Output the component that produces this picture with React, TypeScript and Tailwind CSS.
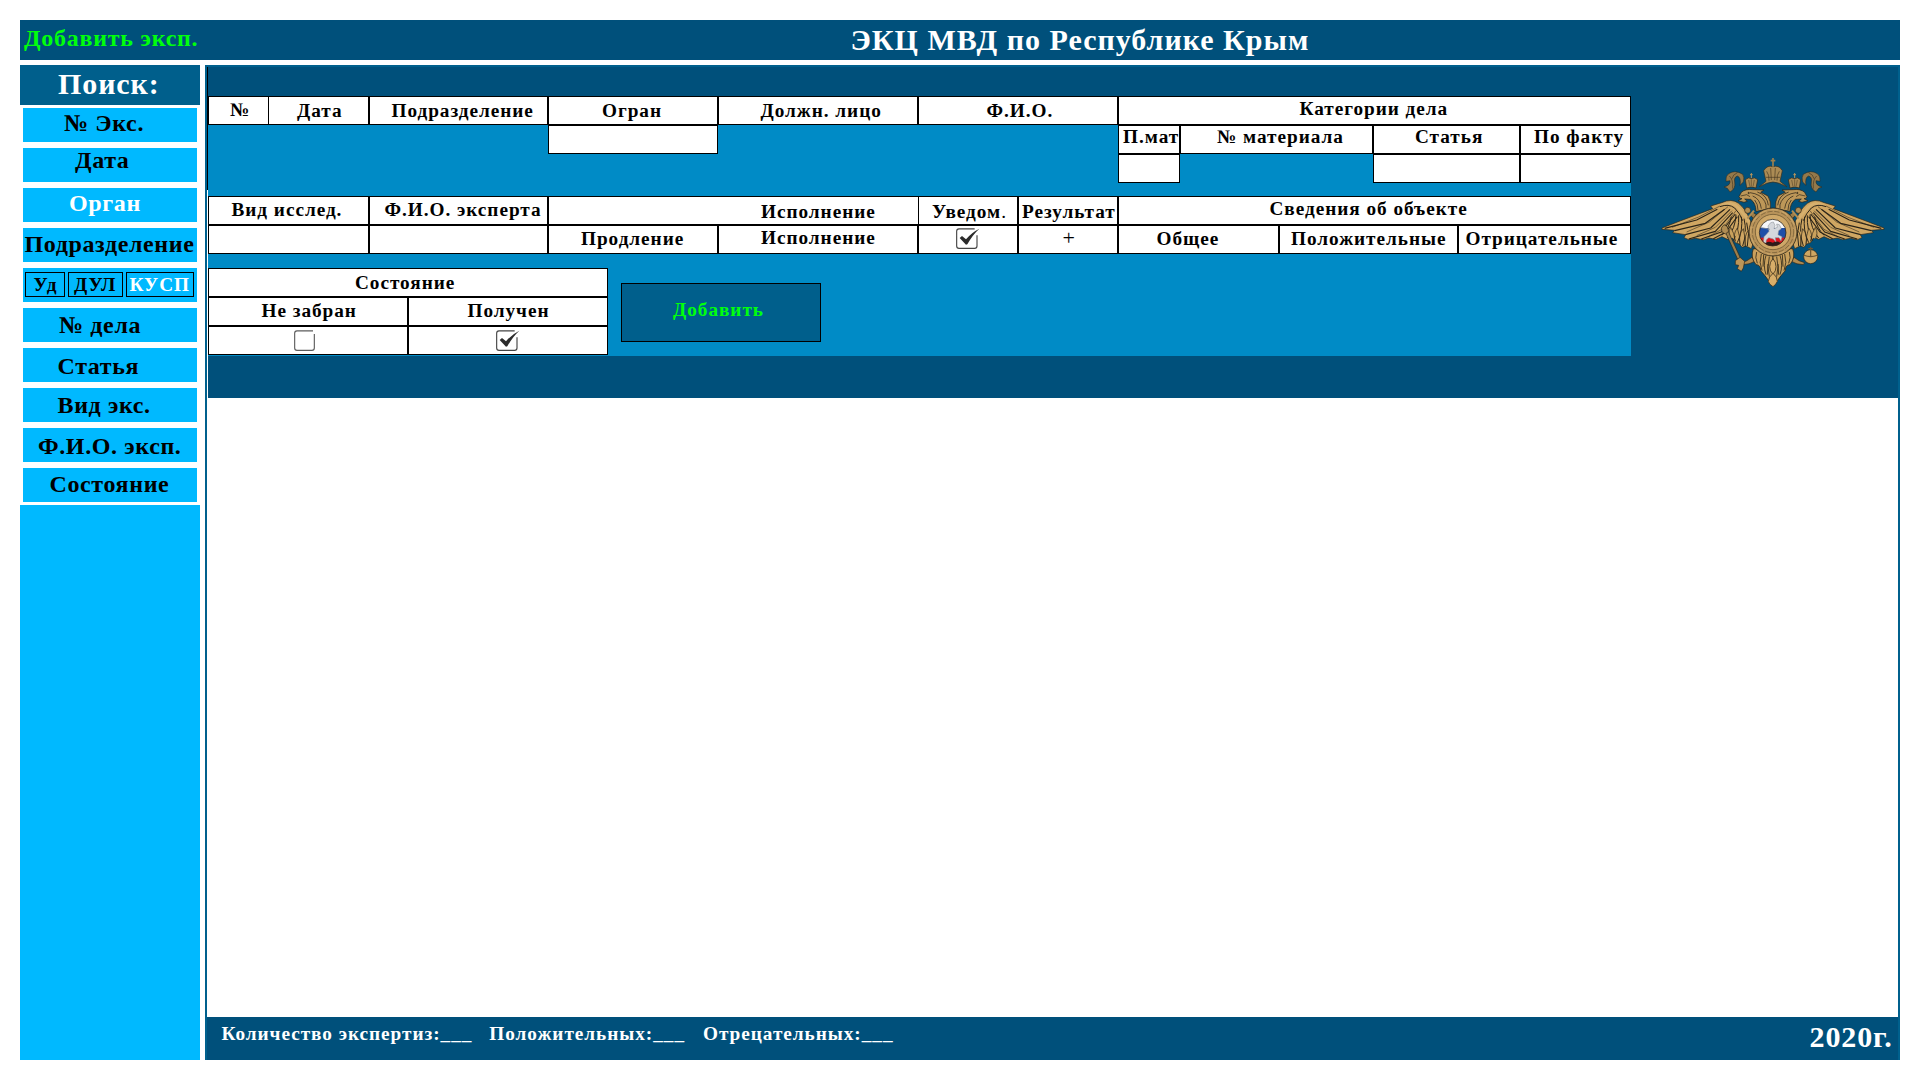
import React from "react";
import clsx from "clsx";

type CellProps = { className?: string; children?: React.ReactNode };

function Cell({ className, children }: CellProps) {
  return (
    <div className={clsx("h-[29px] shrink-0 border-y border-l border-black bg-white", className)}>
      {children}
    </div>
  );
}

function Check({ checked, className }: { checked?: boolean; className?: string }) {
  return (
    <svg className={clsx("h-[22px] w-[24px]", className)} viewBox="0 0 72 66" fill="none">
      {checked ? (
        <>
          <path d="M56 2.5H9Q2 3 2 10V54Q2 61 9 61H56Q63 61 63 54V22" stroke="#444444" strokeWidth="3.4" />
          <path d="M11 30L18 24L30 34Q46 14 70 2Q50 20 34 49L30 50Z" fill="#2b2b2b" />
        </>
      ) : (
        <path d="M57 2.5H9Q2 3 2 10V54Q2 61 9 61H54Q61 61 61 54V12" stroke="#5c5c5c" strokeWidth="3.4" />
      )}
    </svg>
  );
}

function WingHalf() {
  return (
    <g stroke="#2a2418" strokeLinejoin="round">
      {/* ribbon */}
      <path d="M308 103Q286 88 266 101Q256 108 258 124L270 122Q272 136 252 141L262 145L270 156Q288 146 284 126Q281 112 292 108Q304 112 300 136L310 126Q314 112 308 103Z" fill="#94794b" strokeWidth="1.5" />
      <path d="M268 108Q280 118 278 146M292 98Q278 104 276 116" fill="none" strokeWidth="1.5" />
      {/* wing */}
      <path d="M66 264L112 246L218 206L212 198L245 188Q275 174 296 190Q318 208 330 240L346 290L334 326L318 318L306 322L298 312L286 308L276 292L262 298L246 290L228 298L206 294L190 299L166 295L146 299L132 293L137 284L98 278L104 271L66 268Z" fill="#cfa662" strokeWidth="2" />
      <path d="M74 265L170 240L232 208M104 272L196 250L254 208M136 284L212 264L270 208M146 297L226 274L278 218M184 297L244 276L286 222M220 296L258 276L292 230" fill="none" strokeWidth="3.4" />
      <path d="M96 262L176 231L240 198M140 276L208 246L264 200M170 287L226 262L276 212M206 289L246 268L288 212" fill="none" strokeWidth="1.6" />
      <path d="M246 286Q268 264 274 230M262 294Q286 266 288 224M280 302Q298 270 296 226M292 308Q310 270 304 230M308 318Q322 276 312 236M322 318Q330 280 320 248" fill="none" strokeWidth="3" />
      <path d="M246 196Q282 180 302 212Q318 228 328 246" fill="none" stroke="#d6b06e" strokeWidth="8" />
      <path d="M240 200Q266 190 284 204Q300 220 308 242" fill="none" strokeWidth="3" />
      <path d="M272 296Q262 280 272 262Q282 276 286 304Q278 282 292 264Q300 286 300 314Q294 284 310 266Q316 290 316 320Q312 284 326 270" fill="#c9a15c" strokeWidth="2" />
      {/* side crown */}
      <path d="M320 144L316 119Q326 110 334 116Q344 110 353 119L348 144Q334 138 320 144Z" fill="#a98a55" strokeWidth="2" />
      <path d="M326 120L330 140M343 120L339 140M334 118V138" fill="none" stroke="#5e4a2a" strokeWidth="2" />
      <path d="M334 99V114M330 104H338" fill="none" stroke="#b8965c" strokeWidth="3" />
      {/* head and neck */}
      <path d="M297 170L304 157Q316 146 338 149L372 150L362 157L384 168Q394 184 391 206L348 214Q348 190 332 178L314 177L322 184L312 187L294 182L306 176Q298 176 297 170Z" fill="#bd9758" strokeWidth="2.2" />
      <path d="M330 158Q362 162 374 184Q380 194 378 206M338 168Q360 176 364 206M352 156Q382 166 385 196M344 180Q354 192 354 210" fill="none" strokeWidth="2.2" />
      <path d="M302 168L320 164L330 170" fill="none" strokeWidth="2" />
      <circle cx="326" cy="159" r="2.4" fill="#2a2418" />
      {/* sword hilt behind the shield */}
      <path d="M330 224L338 216L362 234L350 246Z" fill="#9b7d49" strokeWidth="2" />
      <circle cx="323" cy="211" r="9" fill="#b08d54" strokeWidth="2" />
      <path d="M322 236L342 212" stroke="#b08d54" strokeWidth="6" />
      {/* leg */}
      <path d="M304 368Q322 364 336 352L344 364Q328 374 308 374Z" fill="#b08a50" strokeWidth="2" />
      {/* tail feathers */}
      <path d="M340 326Q330 352 348 374Q362 374 362 392L374 406L386 422L399 430V330Z" fill="#c9a05c" strokeWidth="2.4" />
      <path d="M350 336Q344 352 352 370M364 342Q356 368 366 392M378 346Q368 376 378 404M388 350Q380 380 388 410M371 344L369 380M384 372L382 404" fill="none" strokeWidth="2.4" />
    </g>
  );
}

function Emblem({ className }: { className?: string }) {
  return (
    <svg className={className} viewBox="60 48 678 396">
      <WingHalf />
      <g transform="matrix(-1 0 0 1 798 0)">
        <WingHalf />
      </g>
      {/* centre crown */}
      <g stroke="#3a2f1c" strokeLinejoin="round">
        <path d="M358 140L378 124L371 92Q382 74 399 80Q416 74 427 92L420 124L440 140L418 130Q399 122 380 130Z" fill="#ab8b54" strokeWidth="2" />
        <path d="M380 94Q388 104 387 122M418 94Q410 104 411 122M392 84L394 120M406 84L404 120M378 112H420" fill="none" strokeWidth="1.8" />
        <path d="M399 54V80M392 62H406" fill="none" stroke="#9c7f4c" strokeWidth="5" />
      </g>
      {/* sceptre */}
      <g stroke="#2a2418" strokeWidth="2">
        <path d="M256 276L264 272L302 356L294 360Z" fill="#9d7f4c" />
        <path d="M244 264L252 254L262 260L266 274L256 282L246 276Z" fill="#b08d54" />
        <path d="M286 362L300 352L314 364L310 384L304 394L292 386L296 376L286 374Z" fill="#ba9559" />
        {/* orb */}
        <circle cx="512" cy="350" r="21" fill="#cfa662" />
        <path d="M492 346Q512 354 532 346M512 320V348M505 326H519" fill="none" stroke="#6a5431" strokeWidth="3.5" />
      </g>
      {/* shield */}
      <g>
        <circle cx="399" cy="276" r="72" fill="#b8935a" stroke="#2a2418" strokeWidth="2.4" />
        <circle cx="399" cy="276" r="62" fill="none" stroke="#6d5832" strokeWidth="2" strokeDasharray="16 5" />
        <circle cx="399" cy="276" r="53" fill="#cfa868" stroke="#6d5832" strokeWidth="2.4" />
        <circle cx="399" cy="276" r="67" fill="none" stroke="#cfaa6c" strokeWidth="3" strokeDasharray="22 12" />
        <clipPath id="disc">
          <circle cx="398" cy="278" r="40" />
        </clipPath>
        <g clipPath="url(#disc)">
          <rect x="356" y="236" width="84" height="30" fill="#f6f7fa" />
          <rect x="356" y="264" width="84" height="30" fill="#1e4fa8" />
          <rect x="356" y="293" width="84" height="28" fill="#dc1420" />
          <path d="M374 310Q384 302 398 308Q416 300 424 312L410 319H384Z" fill="#2c1a1a" />
          <path d="M370 308L372 290L380 282L387 274L384 258L392 248L400 246L405 256L402 266L412 262L410 252L418 254L424 266L416 272L414 284L426 290L423 303L417 293L406 293L408 306L400 297L386 293L379 300L378 309Z" fill="#d4d7dc" stroke="#888d94" strokeWidth="1.6" />
          <path d="M360 262L390 268" fill="none" stroke="#858b94" strokeWidth="2.5" />
        </g>
        <circle cx="398" cy="278" r="40" fill="none" stroke="#33291a" strokeWidth="2.4" />
      </g>
      <path d="M399 356Q408 366 408 380Q408 394 399 402Q389 394 389 380Q389 366 399 356Z" fill="#d8ae69" stroke="#3a2f1c" strokeWidth="2.4" />
      <path d="M399 400Q412 410 412 424Q410 432 399 440Q386 432 385 424Q386 410 399 400Z" fill="#d8ae69" stroke="#3a2f1c" strokeWidth="2.4" />
    </svg>
  );
}

const searchTop = [
  { label: "№ Экс.", pos: "pl-[41px] pt-[5px] text-black" },
  { label: "Дата", pos: "pl-[52px] pt-[2px] text-black" },
  { label: "Орган", pos: "pl-[46px] pt-[5px] text-white" },
  { label: "Подразделение", pos: "pl-[1.5px] pt-[6px] text-black" },
];

const searchBottom = [
  { label: "№ дела", pos: "pl-[36px] pt-[7px]" },
  { label: "Статья", pos: "pl-[34.5px] pt-[8px]" },
  { label: "Вид экс.", pos: "pl-[34.5px] pt-[7px]" },
  { label: "Ф.И.О. эксп.", pos: "pl-[15px] pt-[8px]" },
  { label: "Состояние", pos: "pl-[26.5px] pt-[6px]" },
];

function SearchItem({ className, children }: CellProps) {
  return (
    <div
      className={clsx(
        "h-[34px] w-[174px] bg-[#00b9ff] text-[24px] leading-[20px] tracking-[0.62px]",
        className,
      )}
    >
      {children}
    </div>
  );
}

function Sidebar() {
  return (
    <aside className="flex w-[180px] flex-col">
      <div className="h-10 bg-[#005f8c] pt-[4px] pl-[38px] text-[30px] leading-[29px] tracking-[0.9px] text-white">
        Поиск:
      </div>
      <nav className="flex flex-col items-center gap-[6px] py-[3px]">
        {searchTop.map((i) => (
          <SearchItem key={i.label} className={i.pos}>
            {i.label}
          </SearchItem>
        ))}
        <div className="flex h-[34px] w-[174px] gap-[3px] bg-[#00b9ff] pt-[4px] pl-[2px] text-[19.25px] leading-[17px] tracking-[0.05em]">
          <div className="h-[25px] w-[40px] border border-black pt-[3px] pl-[7.5px]">Уд</div>
          <div className="h-[25px] w-[55px] border border-black pt-[3px] pl-[5px]">ДУЛ</div>
          <div className="h-[25px] w-[68px] border border-black pt-[3px] pl-[2.5px] text-white">КУСП</div>
        </div>
        {searchBottom.map((i) => (
          <SearchItem key={i.label} className={i.pos}>
            {i.label}
          </SearchItem>
        ))}
      </nav>
      <div className="flex-1 bg-[#00b9ff]" />
    </aside>
  );
}

function EntryForm() {
  return (
    <div className="h-[260px] w-[1423px] bg-[#008bc6]">
      <div className="flex h-[100px]">
        <Cell className="w-[60px] pt-[4px] pl-[21px]">№</Cell>
        <Cell className="w-[101px] border-r pt-[5px] pl-[28px]">Дата</Cell>
        <Cell className="w-[179px] border-r pt-[5px] pl-[21.5px]">Подразделение</Cell>
        <div className="w-[170px]">
          <Cell className="border-r pt-[5px] pl-[53px]">Огран</Cell>
          <Cell className="border-r" />
        </div>
        <Cell className="w-[200px] border-r pt-[5px] pl-[41.5px]">Должн. лицо</Cell>
        <Cell className="w-[200px] border-r pt-[5px] pl-[67.5px]">Ф.И.О.</Cell>
        <div className="w-[513px]">
          <Cell className="border-r pt-[3px] pl-[180.5px]">Категории дела</Cell>
          <div className="flex">
            <Cell className="w-[62px] border-r pt-[2px] pl-[4px]">П.мат</Cell>
            <Cell className="w-[193px] border-r pt-[2px] pl-[36px]">№ материала</Cell>
            <Cell className="w-[147px] border-r pt-[2px] pl-[41px]">Статья</Cell>
            <Cell className="w-[111px] border-r pt-[2px] pl-[13px]">По факту</Cell>
          </div>
          <div className="flex">
            <Cell className="w-[62px] border-r" />
            <Cell className="ml-[193px] w-[147px] border-r" />
            <Cell className="w-[111px] border-r" />
          </div>
        </div>
      </div>

      <div className="flex h-[72px]">
        <div className="w-[161px]">
          <Cell className="border-r pt-[4px] pl-[22.5px]">Вид исслед.</Cell>
          <Cell className="border-r" />
        </div>
        <div className="w-[179px]">
          <Cell className="border-r pt-[4px] pl-[14.5px]">Ф.И.О. эксперта</Cell>
          <Cell className="border-r" />
        </div>
        <div className="w-[370px]">
          <Cell className="pt-[6px] pl-[212px]">Исполнение</Cell>
          <div className="flex">
            <Cell className="w-[170px] border-r pt-[4px] pl-[32px]">Продление</Cell>
            <Cell className="w-[200px] border-r pt-[3px] pl-[42px]">Исполнение</Cell>
          </div>
        </div>
        <div className="w-[100px]">
          <Cell className="border-r pt-[6px] pl-[13px]">
            Уведом<span className="font-normal">.</span>
          </Cell>
          <Cell className="border-r pt-[2px] pl-[37px]">
            <Check checked />
          </Cell>
        </div>
        <div className="w-[100px]">
          <Cell className="border-r pt-[6px] pl-[3px]">Результат</Cell>
          <Cell className="border-r pt-[3px] pl-[43.5px] text-[22px] font-normal">+</Cell>
        </div>
        <div className="w-[513px]">
          <Cell className="border-r pt-[3px] pl-[150.5px]">Сведения об объекте</Cell>
          <div className="flex">
            <Cell className="w-[161px] border-r pt-[4px] pl-[37.5px]">Общее</Cell>
            <Cell className="w-[179px] border-r pt-[4px] pl-[11px]">Положительные</Cell>
            <Cell className="w-[173px] border-r pt-[4px] pl-[6.5px]">Отрицательные</Cell>
          </div>
        </div>
      </div>

      <div className="flex gap-[13px]">
        <div className="w-[400px]">
          <Cell className="border-r pt-[5px] pl-[146px]">Состояние</Cell>
          <div className="flex">
            <Cell className="w-[200px] border-r pt-[4px] pl-[52.5px]">Не забран</Cell>
            <Cell className="w-[200px] border-r pt-[4px] pl-[58.5px]">Получен</Cell>
          </div>
          <div className="flex">
            <Cell className="w-[200px] border-r pt-[3px] pl-[85px]">
              <Check />
            </Cell>
            <Cell className="w-[200px] border-r pt-[3px] pl-[87px]">
              <Check checked />
            </Cell>
          </div>
        </div>
        <button className="mt-[15px] h-[59px] w-[200px] border border-black bg-[#005f8c] text-left tracking-[0.05em]">
          <span className="block h-full pt-[17px] pl-[51px] text-[#00ff0c]">Добавить</span>
        </button>
      </div>
    </div>
  );
}

export default function App() {
  return (
    <div className="flex h-[1080px] w-[1920px] flex-col gap-[5px] overflow-hidden bg-white p-5 font-['Liberation_Serif',serif] font-bold whitespace-nowrap text-black">
      <header className="flex h-10 shrink-0 bg-[#00507b]">
        <div className="w-[830.5px] pt-[8px] pl-[4px] text-[24px] leading-[20px] tracking-[0.75px] text-[#00ff0c]">
          Добавить эксп.
        </div>
        <h1 className="pt-[5px] text-[30px] leading-[29px] tracking-[1px] text-white">
          ЭКЦ МВД по Республике Крым
        </h1>
      </header>

      <div className="flex h-[995px] gap-[5px]">
        <Sidebar />
        <main className="flex w-[1695px] flex-col border-x-2 border-t-2 border-[#00608d] text-[19.25px] leading-[17px] tracking-[0.05em]">
          <section className="flex h-[331px]">
            <div className="w-px bg-white">
              <div className="h-[123px] bg-black" />
            </div>
            <div className="flex flex-1 bg-[#00507b] pt-[29px]">
              <EntryForm />
              <Emblem className="mt-[60px] ml-[29px] h-[132px] w-[226px]" />
            </div>
          </section>
          <section className="flex-1 bg-white" />
          <footer className="flex h-[43px] bg-[#00507b] pt-[8px] pl-[14.5px] text-white">
            <div className="w-[267.8px]">Количество экспертиз:___</div>
            <div className="w-[213.7px]">Положительных:___</div>
            <div>Отрецательных:___</div>
            <div className="-mt-[3px] ml-auto w-[88.5px] text-[30px] leading-[29px] tracking-[0.9px]">
              2020г.
            </div>
          </footer>
        </main>
      </div>
    </div>
  );
}
